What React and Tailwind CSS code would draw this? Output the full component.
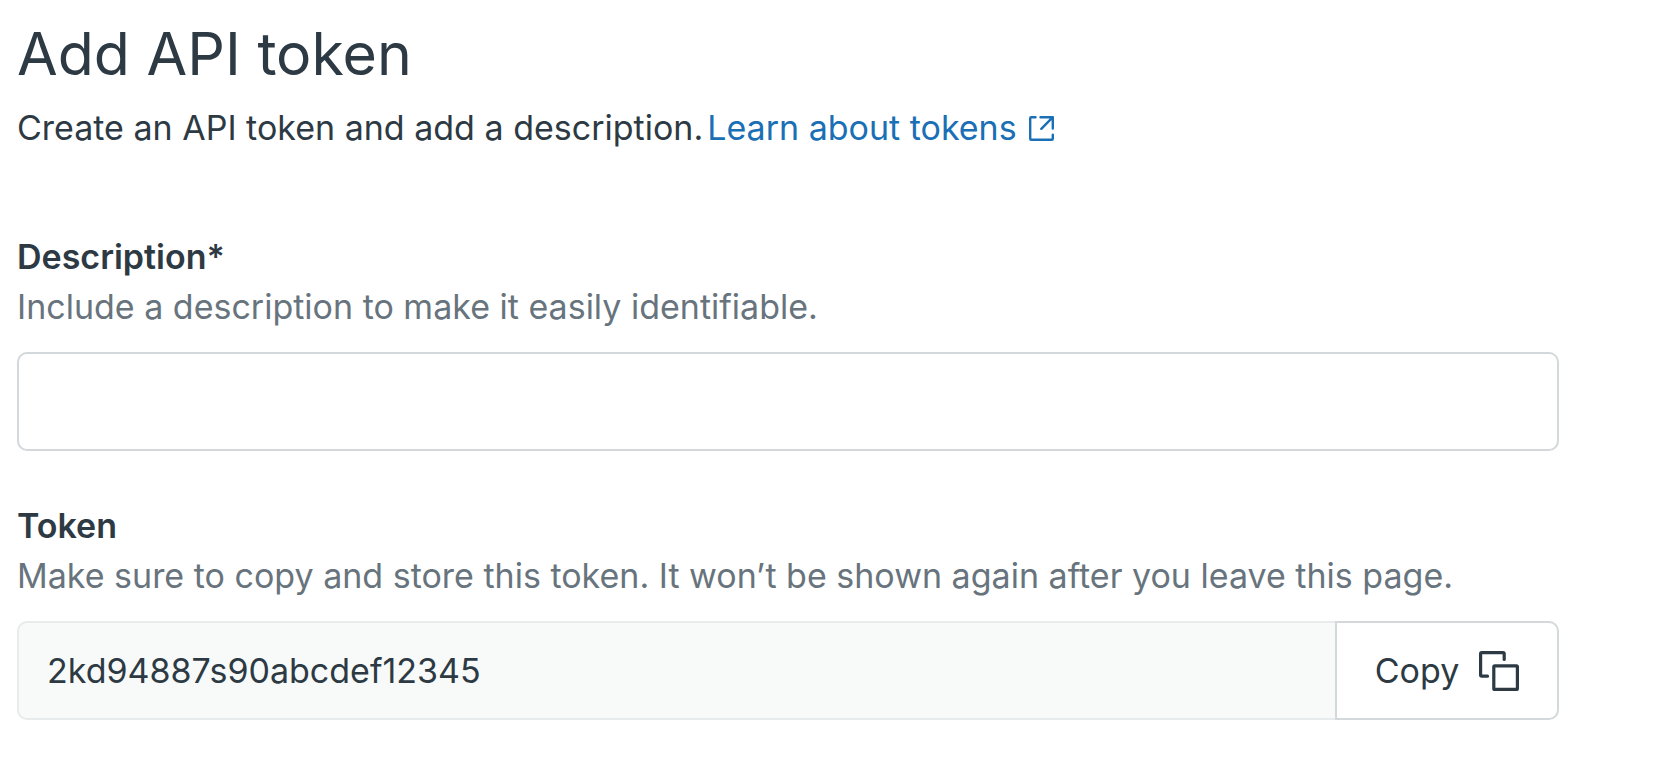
import React, { useState } from 'react';

const ExternalIcon = () => (
  <svg className="h-[25px] w-[25px]" viewBox="0 0 25 25" fill="none" stroke="currentColor" strokeWidth="2.4" strokeLinecap="round" strokeLinejoin="round" aria-hidden="true">
    <path d="M6.5 1.2H2.2Q1.2 1.2 1.2 2.2V22.8Q1.2 23.8 2.2 23.8H22.8Q23.8 23.8 23.8 22.8V18.7" />
    <path d="M11.5 1.2H23.8V12.5M23.8 1.2L12.3 12.8" />
  </svg>
);

const CopyIcon = () => (
  <svg className="h-10 w-10" viewBox="0 0 40 40" fill="none" stroke="currentColor" strokeWidth="3.2" strokeLinecap="round" strokeLinejoin="round" aria-hidden="true">
    <rect x="14.8" y="14.8" width="23.6" height="23.6" rx="1" />
    <path d="M8.5 25.2H2.8Q1.6 25.2 1.6 24V2.8Q1.6 1.6 2.8 1.6H24Q25.2 1.6 25.2 2.8V8.5" />
  </svg>
);

const App = () => {
  const [description, setDescription] = useState('');
  const token = '2kd94887s90abcdef12345';

  const copyToken = () => {
    navigator.clipboard?.writeText(token);
  };

  return (
    <div className="bg-white pt-6 pl-[17px] pr-[121px] font-['Inter',sans-serif] text-[34px] leading-[50px] text-[#2d3a44]">
      <h1 className="text-[59px] leading-[60px]">Add API token</h1>
      <p className="mt-[19px] flex flex-wrap gap-x-1">
        <span>Create an API token and add a description.</span>
        <a href="#tokens" className="inline-flex items-center gap-3 text-[#1a6fb5]">
          Learn about tokens
          <ExternalIcon />
        </a>
      </p>
      <form className="mt-[79px]" onSubmit={(e) => e.preventDefault()}>
        <label htmlFor="description" className="block font-semibold">Description*</label>
        <p className="text-[#68747d]">Include a description to make it easily identifiable.</p>
        <input
          id="description"
          type="text"
          className="mt-5 block h-[99px] w-full rounded-[10px] border-2 border-[#d3d8db] px-7"
          value={description}
          onChange={(e) => setDescription(e.target.value)}
        />
        <label htmlFor="token" className="mt-[50px] block font-semibold">Token</label>
        <p className="text-[#68747d]">Make sure to copy and store this token. It won’t be shown again after you leave this page.</p>
        <div className="mt-5 flex h-[99px]">
          <input
            id="token"
            type="text"
            readOnly
            className="min-w-0 flex-1 rounded-l-[10px] border-2 border-r-0 border-[#e7ebeb] bg-[#f8faf9] px-7"
            value={token}
          />
          <button
            type="button"
            className="flex w-[224px] items-center justify-center gap-5 rounded-r-[10px] border-2 border-[#d3d8db]"
            onClick={copyToken}
          >
            Copy
            <CopyIcon />
          </button>
        </div>
      </form>
    </div>
  );
};

export default App;
